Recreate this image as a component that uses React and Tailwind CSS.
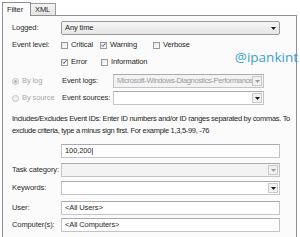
import React from "react";

const font = { fontFamily: '"Liberation Sans", Arial, sans-serif' };

function Check({ checked, label, w }) {
  return (
    <div className={`flex items-center ${w}`}>
      <span className="flex h-[7px] w-[7px] items-center justify-center border border-[#9a9a9a] bg-gradient-to-br from-[#e6e6e6] to-white">
        {checked && (
          <svg width="6" height="6" viewBox="0 0 6 6">
            <path d="M0.8 3.2 L2.3 4.8 L5.2 1" stroke="#3a4f7a" strokeWidth="1.1" fill="none" />
          </svg>
        )}
      </span>
      <span className="ml-[3px] text-[#1e1e1e]">{label}</span>
    </div>
  );
}

function Radio({ on, label }) {
  return (
    <div className="flex w-[50px] items-center text-[#a8a8a8]">
      <span className="flex h-[7px] w-[7px] items-center justify-center rounded-full border border-[#c4c4c4] bg-[#f2f2f2]">
        {on && <span className="h-[3px] w-[3px] rounded-full bg-[#b0b0b0]" />}
      </span>
      <span className="ml-[3px]">{label}</span>
    </div>
  );
}

function DropBtn({ dark }) {
  return (
    <span className="ml-auto mr-[1px] flex h-[10px] w-[10px] shrink-0 items-center justify-center border border-[#c9c9c9] bg-[#f1f1f1]">
      <svg width="5" height="3" viewBox="0 0 5 3">
        <path d="M0 0 L5 0 L2.5 3 Z" fill={dark ? "#1a1a1a" : "#9c9c9c"} />
      </svg>
    </span>
  );
}

function Field({ children, disabled, drop, dark, w = "w-[219px]" }) {
  return (
    <div
      className={`flex h-[14px] ${w} items-center border border-[#c2c4c8] border-t-[#a9abb0] pl-[3px] ${
        disabled ? "bg-[#f3f3f3] text-[#9a9a9a]" : "bg-white text-[#2a2a2a]"
      }`}
    >
      <span className="overflow-hidden whitespace-nowrap">{children}</span>
      {drop && <DropBtn dark={dark} />}
    </div>
  );
}

function Row({ label, children, mt = "mt-[3px]" }) {
  return (
    <div className={`flex h-[14px] items-center ${mt}`}>
      <span className="w-[49px] shrink-0 whitespace-nowrap text-[#2a2a2a]">{label}</span>
      {children}
    </div>
  );
}

export default function App() {
  return (
    <div
      className="h-[237px] w-[300px] overflow-hidden bg-white text-[7.5px] leading-none tracking-[-0.1px]"
      style={font}
    >
      <div className="flex h-[15px] items-end pl-[2px]">
        <div className="relative z-10 -mb-[1px] flex h-[14px] w-[29px] items-center border border-b-0 border-[#8e9096] bg-[#fbfbfb] pl-[4px] text-[#1e1e1e]">
          Filter
        </div>
        <div className="flex h-[12px] w-[25px] items-center border border-b-0 border-l-0 border-[#9a9ca2] bg-gradient-to-b from-[#f4f4f4] to-[#e4e4e4] pl-[4px] text-[#1e1e1e]">
          XML
        </div>
      </div>
      <div className="ml-[2px] h-[230px] w-[295px] border border-[#8e9096] bg-[#fbfbfb] pl-[9px]">
        <Row label="Logged:" mt="mt-[5px]">
          <div className="flex h-[14px] w-[219px] items-center rounded-[2px] border border-[#9a9a9a] bg-gradient-to-b from-[#f5f5f5] to-[#e6e6e6] pl-[3px] text-[#1e1e1e]">
            Any time
            <svg className="ml-auto mr-[3px]" width="5" height="3" viewBox="0 0 5 3">
              <path d="M0 0 L5 0 L2.5 3 Z" fill="#1a1a1a" />
            </svg>
          </div>
        </Row>
        <Row label="Event level:">
          <Check label="Critical" w="w-[39px]" />
          <Check label="Warning" checked w="w-[53px]" />
          <Check label="Verbose" />
        </Row>
        <div className="relative">
          <span
            className="absolute -right-[2px] -top-[1px] text-[13.5px] tracking-normal text-[#3aa0cb]"
            style={{ fontFamily: '"Open Sans", sans-serif' }}
          >
            @ipankint
          </span>
        </div>
        <Row label="">
          <Check label="Error" checked w="w-[40px]" />
          <Check label="Information" />
        </Row>
        <div className="mt-[5px] flex h-[14px] items-center">
          <Radio on label="By log" />
          <span className="w-[51px] shrink-0 whitespace-nowrap text-[#2a2a2a]">Event logs:</span>
          <Field disabled drop w="w-[151px]">
            <span className="tracking-[-0.35px]">Microsoft-Windows-Diagnostics-Performance</span>
          </Field>
        </div>
        <div className="mt-[3px] flex h-[14px] items-center">
          <Radio label="By source" />
          <span className="w-[51px] shrink-0 whitespace-nowrap text-[#2a2a2a]">Event sources:</span>
          <Field drop dark w="w-[151px]"></Field>
        </div>
        <div className="mt-[8px] whitespace-nowrap leading-[12px] tracking-[-0.3px] text-[#1e1e1e]">
          Includes/Excludes Event IDs: Enter ID numbers and/or ID ranges separated by commas. To
          <br />
          exclude criteria, type a minus sign first. For example 1,3,5-99, -76
        </div>
        <div className="mt-[7px] flex h-[14px] pl-[49px]">
          <Field>
            100,200<span className="text-black">|</span>
          </Field>
        </div>
        <Row label="Task category:" mt="mt-[5px]">
          <Field disabled drop></Field>
        </Row>
        <Row label="Keywords:" mt="mt-[4px]">
          <Field drop dark></Field>
        </Row>
        <Row label="User:" mt="mt-[6px]">
          <Field>&lt;All Users&gt;</Field>
        </Row>
        <Row label="Computer(s):" mt="mt-[3px]">
          <Field>&lt;All Computers&gt;</Field>
        </Row>
      </div>
    </div>
  );
}
